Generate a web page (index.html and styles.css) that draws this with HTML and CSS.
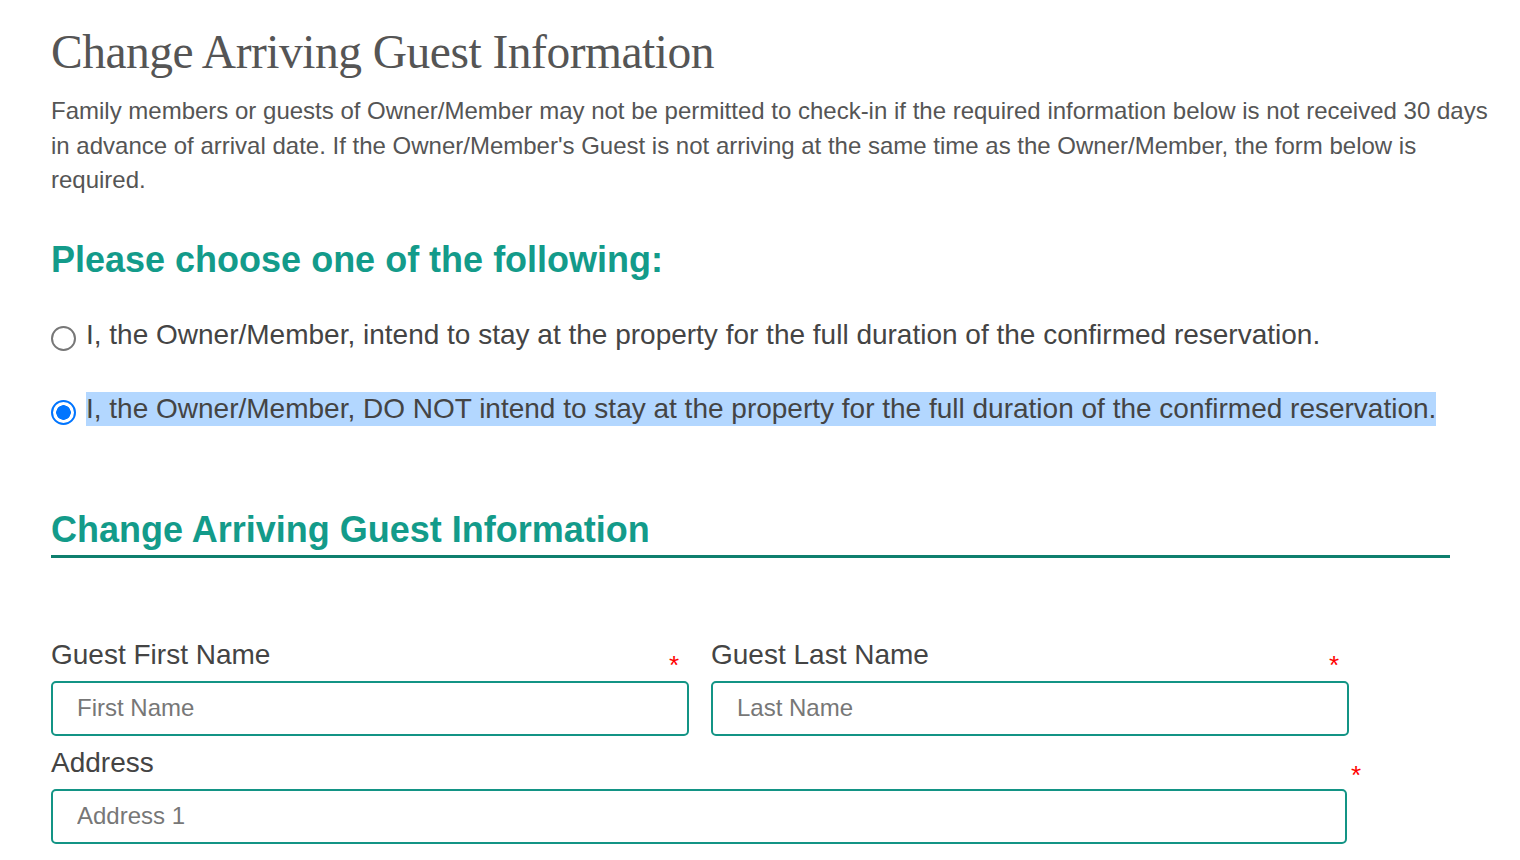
FILE: index.html
```html
<!DOCTYPE html>
<html lang="en">
<head>
    <meta charset="UTF-8">
    <title>Change Arriving Guest Information</title>
    <link rel="stylesheet" href="styles.css">
</head>
<body>
<div id="wrap">
    <h1 class="page_title">Change Arriving Guest Information</h1>
    <p class="intro">Family members or guests of Owner/Member may not be permitted to check-in if the required information below is not received 30 days in advance of arrival date. If the Owner/Member's Guest is not arriving at the same time as the Owner/Member, the form below is required.</p>

    <h2 class="choose">Please choose one of the following:</h2>
    <ul class="options">
        <li>
            <label class="opt">
                <input type="radio" name="stay" value="yes">
                <span class="opt_text">I, the Owner/Member, intend to stay at the property for the full duration of the confirmed reservation.</span>
            </label>
        </li>
        <li>
            <label class="opt">
                <input type="radio" name="stay" value="no" checked>
                <span class="opt_text sel">I, the Owner/Member, DO NOT intend to stay at the property for the full duration of the confirmed reservation.</span>
            </label>
        </li>
    </ul>

    <h3 class="section">Change Arriving Guest Information</h3>

    <div class="form">
        <div class="row">
            <div class="field">
                <div class="label_row">
                    <label for="fname">Guest First Name</label>
                    <span class="req">*</span>
                </div>
                <input type="text" id="fname" placeholder="First Name">
            </div>
            <div class="field">
                <div class="label_row">
                    <label for="lname">Guest Last Name</label>
                    <span class="req">*</span>
                </div>
                <input type="text" id="lname" placeholder="Last Name">
            </div>
        </div>
        <div class="field wide">
            <div class="label_row">
                <label for="addr">Address</label>
                <span class="req">*</span>
            </div>
            <input type="text" id="addr" placeholder="Address 1">
        </div>
    </div>
</div>
</body>
</html>
```

FILE: styles.css
```css
body, div, ul, li, h1, h2, h3, p, label, span, input {
    margin: 0;
    padding: 0;
}

ul, li {
    list-style-type: none
}

body {
    background-color: #fff;
    font-family: "Liberation Sans", Arial, sans-serif;
    color: #444;
}

#wrap {
    width: 1445px;
    padding: 22px 0 0 51px;
}

.page_title {
    font-family: "Liberation Serif", "DejaVu Serif", serif;
    font-weight: normal;
    font-size: 47.5px;
    line-height: 60px;
    color: #555;
    letter-spacing: -0.5px;
}

.intro {
    margin-top: 12px;
    font-size: 24px;
    line-height: 34.5px;
    color: #555;
}

.choose {
    margin-top: 42px;
    font-size: 36px;
    line-height: 40px;
    color: #139b8a;
}

.options {
    margin-top: 38px;
}

.options li + li {
    margin-top: 40px;
}

.opt {
    display: flex;
    align-items: center;
    gap: 10px;
    font-size: 28px;
    line-height: 34px;
    color: #444;
}

.opt input {
    appearance: none;
    -webkit-appearance: none;
    flex: none;
    width: 25px;
    height: 25px;
    margin-top: 8px;
    border: 2px solid #777;
    border-radius: 50%;
    box-sizing: border-box;
    background-color: #fff;
}

.opt input:checked {
    border-color: #0075ff;
    background: radial-gradient(circle, #0075ff 0 7px, #fff 7.5px);
}

.opt_text.sel {
    background-color: #b3d7ff;
}

.section {
    width: 1399px;
    margin-top: 84px;
    padding-bottom: 5px;
    border-bottom: 3px solid #0e7f6e;
    font-size: 36px;
    line-height: 40px;
    color: #139b8a;
}

.form {
    margin-top: 79px;
}

.row {
    display: flex;
    gap: 22px;
}

.field {
    width: 638px;
}

.field.wide {
    width: 1296px;
    margin-top: 9px;
}

.label_row {
    display: flex;
    justify-content: space-between;
    height: 44px;
}

.label_row label {
    font-size: 28px;
    line-height: 36px;
    color: #444;
}

.req {
    margin-top: 18px;
    margin-right: 10px;
    font-size: 26px;
    line-height: 20px;
    color: #f00;
}

.field.wide .req {
    margin-top: 20px;
    margin-right: -14px;
}

.field input {
    display: block;
    width: 100%;
    height: 55px;
    box-sizing: border-box;
    padding: 0 24px;
    border: 2px solid #139485;
    border-radius: 5px;
    font-family: "Liberation Sans", Arial, sans-serif;
    font-size: 24px;
    color: #444;
    outline: none;
}

.field input::placeholder {
    color: #777;
}
```
